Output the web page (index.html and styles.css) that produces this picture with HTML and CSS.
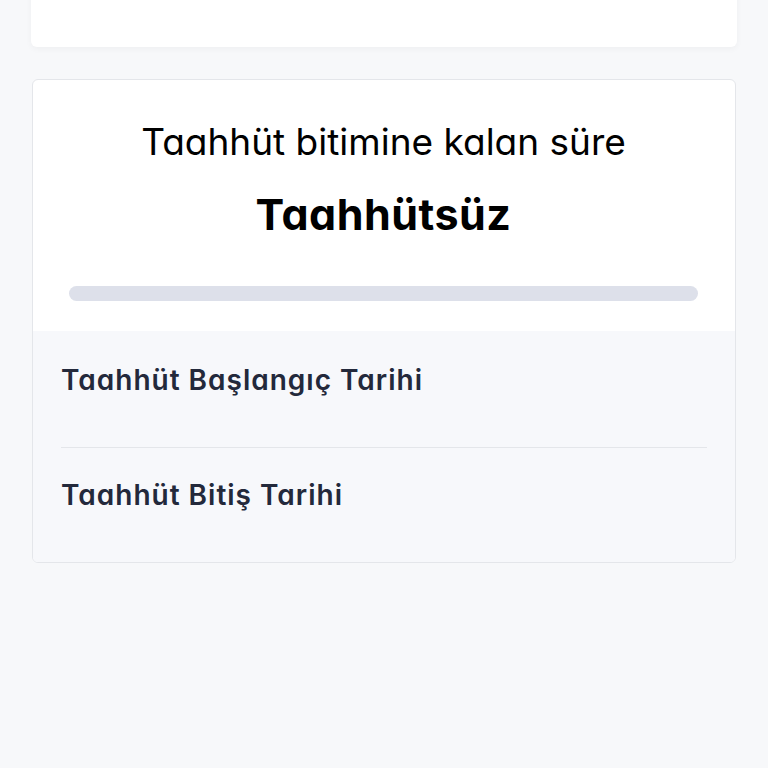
FILE: index.html
```html
<!DOCTYPE html>
<html lang="tr">
<head>
    <meta charset="UTF-8">
    <meta name="viewport" content="width=device-width, initial-scale=1.0">
    <title>Taahhüt</title>
    <link rel="stylesheet" href="styles.css">
</head>
<body>
    <div class="page">
        <div class="card card-top"></div>
        <div class="card commitment">
            <div class="summary">
                <div class="summary-title">Taahhüt bitimine kalan süre</div>
                <div class="summary-value">Taahhütsüz</div>
                <div class="progress">
                    <div class="progress-fill" style="width: 0%"></div>
                </div>
            </div>
            <div class="details">
                <div class="detail-row">
                    <div class="detail-label">Taahhüt Başlangıç Tarihi</div>
                </div>
                <div class="detail-row">
                    <div class="detail-label">Taahhüt Bitiş Tarihi</div>
                </div>
            </div>
        </div>
    </div>
</body>
</html>
```

FILE: styles.css
```css
/* Page */
body {
    font-family: Inter, 'Noto Sans', sans-serif;
    font-feature-settings: "cv11"; /* single-storey a */
    margin: 0;
    padding: 0;
    background-color: #f7f8fa;
    color: #000;
}
.page {
    display: flex;
    flex-direction: column;
    gap: 32px;
    padding: 0 31px;
}
.card {
    background-color: #fff;
    border-radius: 6px;
}
.card-top {
    height: 57px;
    margin-top: -10px;
    box-shadow: 0 2px 6px rgba(0, 0, 0, 0.04);
}
.commitment {
    margin: 0 1px;
    border: 1px solid #e4e6ea;
    overflow: hidden;
}

/* Summary block */
.summary {
    padding: 38px 37px 30px 36px;
    text-align: center;
}
.summary-title {
    font-size: 37px;
    line-height: 48px;
    font-weight: 400;
}
.summary-value {
    margin-top: 22px;
    font-size: 43px;
    line-height: 52px;
    font-weight: 700;
    letter-spacing: 0.5px;
}
.progress {
    margin-top: 46px;
    height: 15px;
    border-radius: 8px;
    background-color: #dde0ea;
    overflow: hidden;
}
.progress-fill {
    height: 100%;
    background-color: #5b6bf0;
}

/* Detail rows */
.details {
    background-color: #f7f8fb;
    padding: 0 28px;
}
.detail-row {
    height: 117px;
    padding-top: 33px;
    box-sizing: border-box;
    border-bottom: 1px solid #e4e6ea;
}
.detail-row:last-child {
    height: 114px;
    padding-top: 31px;
    border-bottom: none;
}
.detail-label {
    font-size: 28px;
    line-height: 32px;
    font-weight: 600;
    letter-spacing: 1px;
    color: #23293b;
}
```
